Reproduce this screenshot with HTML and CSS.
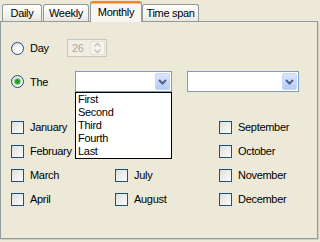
FILE: index.html
```html
<!DOCTYPE html>
<html lang="en">
<head>
  <meta charset="UTF-8" />
  <title>Schedule - Monthly</title>
  <link rel="stylesheet" href="styles.css">
</head>
<body>
  <div class="tabs">
    <div class="tab">Daily</div>
    <div class="tab">Weekly</div>
    <div class="tab active">Monthly</div>
    <div class="tab">Time span</div>
  </div>

  <div class="panel">
    <div class="row row-day">
      <label class="opt"><span class="radio"></span>Day</label>
      <div class="spin">
        <span class="spin-val">26</span>
        <span class="spin-btns">
          <svg width="9" height="12" viewBox="0 0 9 12">
            <path d="M1.5 4.5 L4.5 1.5 L7.5 4.5" fill="none" stroke="#C9C7BA" stroke-width="1.6" />
            <path d="M1.5 7.5 L4.5 10.5 L7.5 7.5" fill="none" stroke="#C9C7BA" stroke-width="1.6" />
          </svg>
        </span>
      </div>
    </div>

    <div class="row row-the">
      <label class="opt"><span class="radio checked"></span>The</label>
      <div class="combo-wrap">
        <div class="combo combo-which">
          <span class="combo-btn">
            <svg width="9" height="6" viewBox="0 0 9 6"><path d="M1 1 L4.5 4.5 L8 1" fill="none" stroke="#4D6185" stroke-width="2" /></svg>
          </span>
        </div>
        <!-- open list of the first combo -->
        <ul class="droplist">
          <li>First</li>
          <li>Second</li>
          <li>Third</li>
          <li>Fourth</li>
          <li>Last</li>
        </ul>
      </div>
      <div class="combo combo-day">
        <span class="combo-btn">
          <svg width="9" height="6" viewBox="0 0 9 6"><path d="M1 1 L4.5 4.5 L8 1" fill="none" stroke="#4D6185" stroke-width="2" /></svg>
        </span>
      </div>
    </div>

    <div class="months">
      <label class="month"><span class="check"></span>January</label>
      <label class="month"><span class="check"></span>February</label>
      <label class="month"><span class="check"></span>March</label>
      <label class="month"><span class="check"></span>April</label>
      <label class="month"><span class="check"></span>May</label>
      <label class="month"><span class="check"></span>June</label>
      <label class="month"><span class="check"></span>July</label>
      <label class="month"><span class="check"></span>August</label>
      <label class="month"><span class="check"></span>September</label>
      <label class="month"><span class="check"></span>October</label>
      <label class="month"><span class="check"></span>November</label>
      <label class="month"><span class="check"></span>December</label>
    </div>
  </div>
</body>
</html>
```

FILE: styles.css
```css
* {
  margin: 0;
  padding: 0;
  box-sizing: border-box;
}

body {
  width: 320px;
  height: 242px;
  background: #ECE9D8;
  font-family: "Liberation Sans", Arial, sans-serif;
  font-size: 11px;
  letter-spacing: -0.3px;
  color: #000;
  overflow: hidden;
}

/* tab strip */
.tabs {
  display: flex;
  align-items: flex-end;
  height: 21px;
  padding-left: 2px;
}

.tab {
  height: 17px;
  margin-right: 1px;
  display: flex;
  align-items: center;
  justify-content: center;
  white-space: nowrap;
  border: 1px solid #919B9C;
  border-bottom: none;
  border-radius: 3px 3px 0 0;
  background: linear-gradient(#FFFFFF, #F1F0EA 70%, #E8E6DC);
}

.tab:first-child {
  width: 40px;
}

.tab:nth-child(2) {
  width: 46px;
}

.tab:last-child {
  width: 57px;
  margin-right: 0;
}

.tab.active {
  position: relative;
  z-index: 1;
  width: 52px;
  height: 21px;
  margin-right: 0;
  margin-bottom: -1px;
  padding-bottom: 2px;
  border-top: 2px solid #E68B2C;
  box-shadow: inset 0 1px 0 #FFC73C;
  background: #F7F6F1;
}

/* page of the tab control */
.panel {
  width: 318px;
  height: 218px;
  border: 1px solid #919B9C;
  box-shadow: 1px 1px 0 #D0CEBF;
  padding: 0 10px;
}

.row {
  display: flex;
  align-items: center;
}

.row-day {
  height: 18px;
  margin-top: 17px;
}

.row-the {
  height: 21px;
  margin-top: 14px;
}

.opt {
  display: flex;
  align-items: center;
}

.row-day .opt {
  width: 56px;
}

.row-the .opt {
  width: 64px;
}

.radio {
  width: 13px;
  height: 13px;
  margin-right: 6px;
  border: 1px solid #1C5180;
  border-radius: 50%;
  background: radial-gradient(circle at 65% 65%, #FFFFFF 20%, #DCDCD7 90%);
  display: flex;
  align-items: center;
  justify-content: center;
}

.radio.checked::after {
  content: "";
  width: 5px;
  height: 5px;
  border-radius: 50%;
  background: #21A121;
  box-shadow: 0 0 1px 1px #88D088;
}

/* disabled spin box */
.spin {
  width: 40px;
  height: 18px;
  border: 1px solid #C9C7BA;
  background: #F0EEE4;
  display: flex;
  align-items: center;
  justify-content: space-between;
  padding: 1px;
}

.spin-val {
  color: #ACA899;
  padding-left: 3px;
}

.spin-btns {
  width: 15px;
  height: 14px;
  border: 1px solid #E3E1D6;
  border-radius: 2px;
  background: #F5F4EE;
  display: flex;
  align-items: center;
  justify-content: center;
}

/* combo boxes */
.combo-wrap {
  position: relative;
}

.combo {
  height: 21px;
  border: 1px solid #7F9DB9;
  background: #fff;
  display: flex;
  justify-content: flex-end;
  padding: 1px;
}

.combo-which {
  width: 97px;
}

.combo-day {
  width: 112px;
  margin-left: 15px;
}

.combo-btn {
  width: 15px;
  height: 17px;
  border: 1px solid #C5D5FC;
  border-radius: 2px;
  background: linear-gradient(#DCE7FE, #B7CAF7);
  display: flex;
  align-items: center;
  justify-content: center;
}

.droplist {
  position: absolute;
  top: 100%;
  left: 0;
  z-index: 2;
  width: 97px;
  border: 1px solid #000;
  background: #fff;
  list-style: none;
}

.droplist li {
  height: 13px;
  line-height: 13px;
  padding-left: 2px;
}

/* month check boxes */
.months {
  margin-top: 23px;
  display: grid;
  grid-auto-flow: column;
  grid-template-rows: repeat(4, 24px);
  grid-template-columns: repeat(3, 104px);
}

.month {
  display: flex;
  align-items: center;
}

.check {
  width: 13px;
  height: 13px;
  margin-right: 6px;
  border: 1px solid #1C5180;
  background: linear-gradient(135deg, #DCDCD7, #FFFFFF);
}
```
